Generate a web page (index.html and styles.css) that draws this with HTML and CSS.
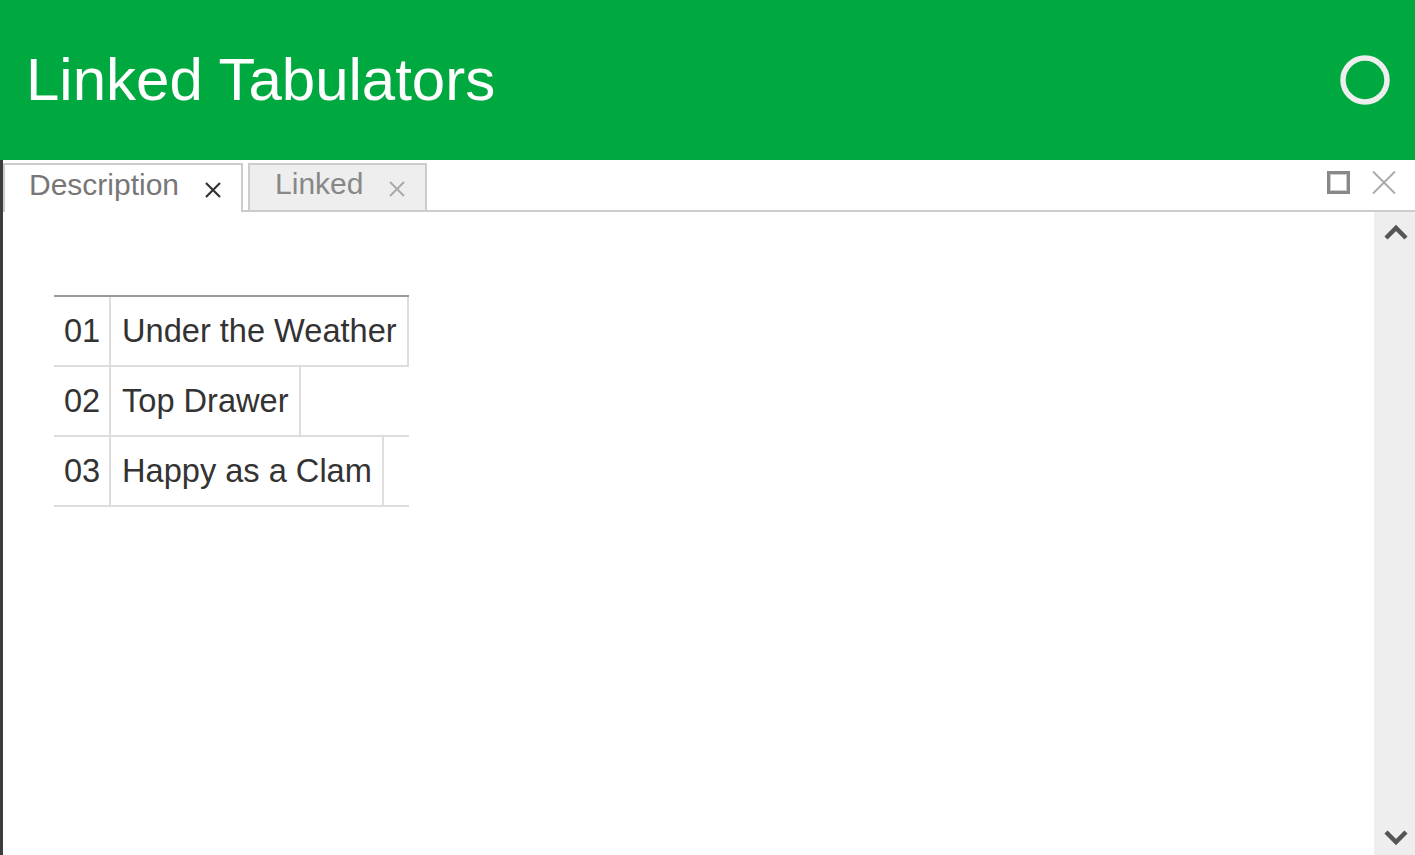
FILE: index.html
```html
<!DOCTYPE html>
<html lang="en">
<head>
<meta charset="utf-8">
<title>Linked Tabulators</title>
<link rel="stylesheet" href="styles.css">
</head>
<body>
<header class="app-header">
  <h1 class="app-title">Linked Tabulators</h1>
  <svg class="status-icon" width="52" height="52" viewBox="0 0 52 52"><circle cx="26" cy="26" r="22" fill="none" stroke="#eeeeee" stroke-width="5.5"/></svg>
</header>
<section class="panel">
  <div class="tabstrip">
    <div class="tab active">
      <span class="tab-label">Description</span>
      <svg class="tab-close" width="18" height="18" viewBox="0 0 18 18"><path d="M2 2 L16 16 M16 2 L2 16" stroke="#333" stroke-width="2.2" fill="none"/></svg>
    </div>
    <div class="tab">
      <span class="tab-label">Linked</span>
      <svg class="tab-close" width="18" height="18" viewBox="0 0 18 18"><path d="M2 2 L16 16 M16 2 L2 16" stroke="#aaa" stroke-width="2" fill="none"/></svg>
    </div>
    <div class="window-controls">
      <svg class="ctrl" width="23" height="23" viewBox="0 0 23 23"><rect x="1.5" y="1.5" width="20" height="20" fill="none" stroke="#888" stroke-width="3"/><rect x="3.5" y="3.5" width="16" height="16" fill="none" stroke="#ccc" stroke-width="1"/></svg>
      <svg class="ctrl" width="24" height="23" viewBox="0 0 24 23"><path d="M1 0.5 L23 22.5 M23 0.5 L1 22.5" stroke="#aaa" stroke-width="2" fill="none"/></svg>
    </div>
  </div>
  <div class="body">
    <div class="content">
      <div class="grid">
        <div class="row"><div class="cell num">01</div><div class="cell">Under the Weather</div></div>
        <div class="row"><div class="cell num">02</div><div class="cell">Top Drawer</div></div>
        <div class="row"><div class="cell num">03</div><div class="cell">Happy as a Clam</div></div>
      </div>
    </div>
    <div class="scrollbar">
      <svg width="41" height="40" viewBox="0 0 41 40"><polyline points="12,26 22,16 32,26" fill="none" stroke="#555" stroke-width="4.5"/></svg>
      <svg width="41" height="40" viewBox="0 0 41 40"><polyline points="12,17 22,27 32,17" fill="none" stroke="#555" stroke-width="4.5"/></svg>
    </div>
  </div>
</section>
</body>
</html>
```

FILE: styles.css
```css
* { box-sizing: border-box; }
html, body { margin: 0; padding: 0; }
body {
  width: 1415px;
  height: 855px;
  overflow: hidden;
  font-family: "Liberation Sans", Arial, sans-serif;
  background: #fff;
  display: flex;
  flex-direction: column;
}
.app-header {
  height: 160px;
  flex: none;
  background: #00a93f;
  display: flex;
  align-items: center;
  justify-content: space-between;
  padding: 0 24px 0 26px;
}
.app-title {
  margin: 0;
  color: #fff;
  font-weight: normal;
  font-size: 60px;
  line-height: 1;
}
.status-icon { display: block; }
.panel {
  flex: 1;
  display: flex;
  flex-direction: column;
  border-left: 3px solid #3d3d3d;
  min-height: 0;
}
.tabstrip {
  height: 52px;
  flex: none;
  display: flex;
  align-items: flex-end;
  border-bottom: 2px solid #ccc;
}
.tab {
  height: 47px;
  display: flex;
  align-items: center;
  gap: 25px;
  padding: 0 19px 0 25px;
  border: 2px solid #ccc;
  border-bottom: none;
  background: #eee;
  color: #888;
  font-size: 30px;
  margin-right: 5px;
}
.tab.active {
  height: 49px;
  margin-bottom: -2px;
  background: #fff;
  color: #777;
  padding-right: 19px;
  padding-left: 24px;
}
.tab-label {
  line-height: 1;
  margin-bottom: 7px;
}
.tab-close { display: block; margin-top: 2px; }
.window-controls {
  margin-left: auto;
  align-self: flex-start;
  margin-top: 11px;
  margin-right: 19px;
  display: flex;
  gap: 22px;
}
.ctrl { display: block; }
.body {
  flex: 1;
  display: flex;
  min-height: 0;
}
.content {
  flex: 1;
  padding: 83px 0 0 51px;
}
.grid {
  display: inline-flex;
  flex-direction: column;
  border-top: 2px solid #999;
}
.row {
  display: flex;
  height: 70px;
  border-bottom: 2px solid #ddd;
}
.cell {
  display: flex;
  align-items: center;
  padding: 0 10px 0 11px;
  border-right: 2px solid #ddd;
  font-size: 32.6px;
  color: #333;
}
.cell.num {
  width: 57px;
  padding: 0 0 0 10px;
}
.scrollbar {
  width: 41px;
  flex: none;
  background: #eee;
  display: flex;
  flex-direction: column;
  justify-content: space-between;
}
.scrollbar svg { display: block; }
```
